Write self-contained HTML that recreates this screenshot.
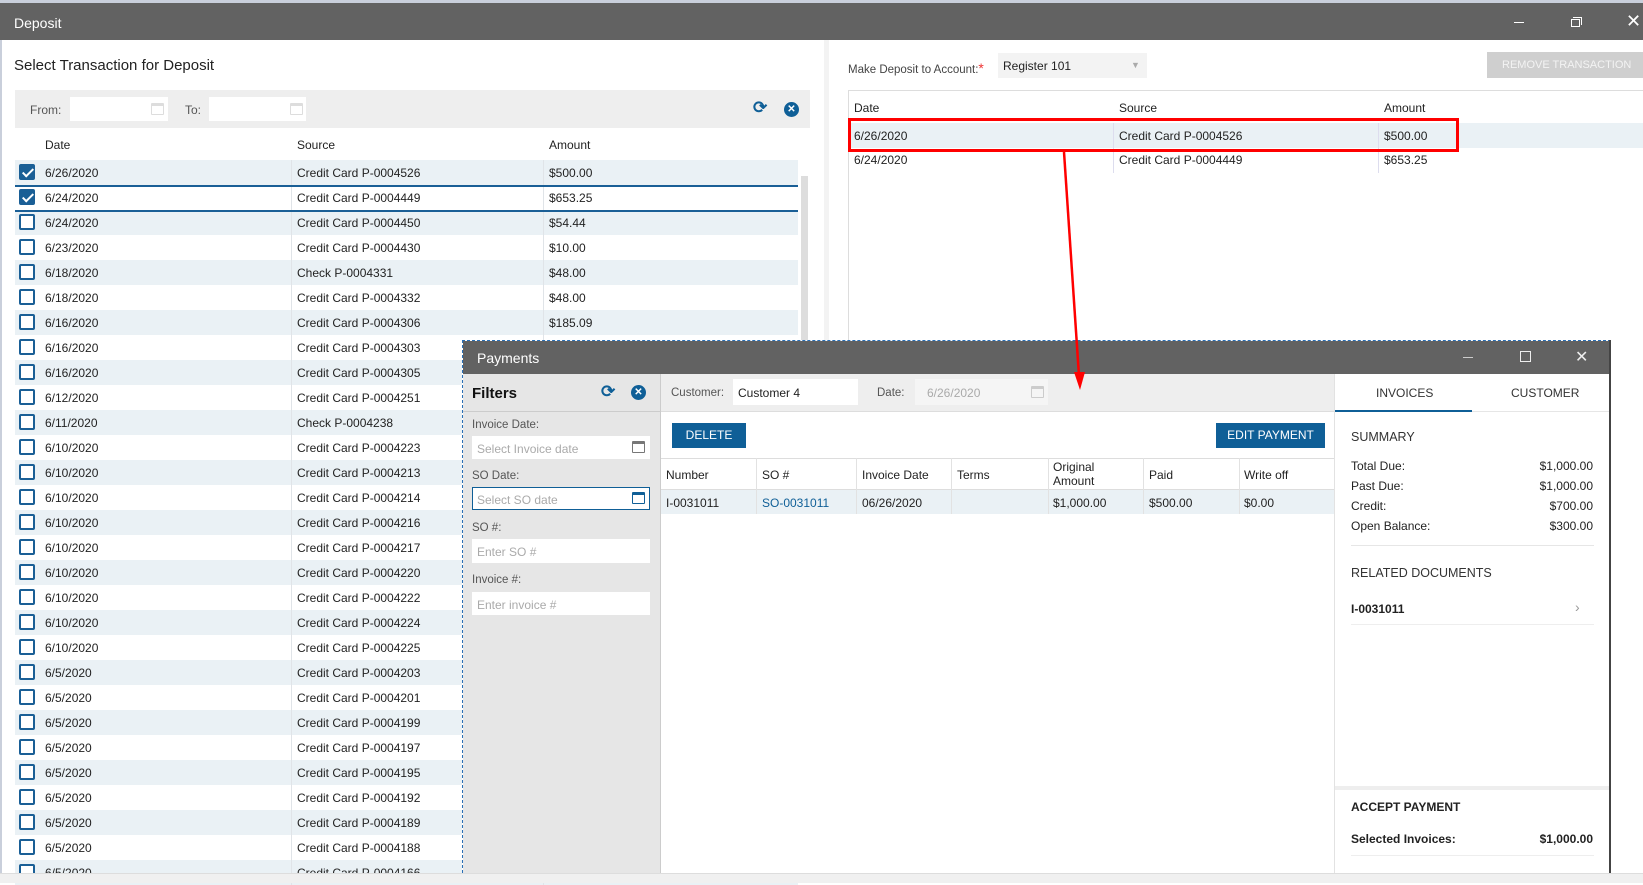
<!DOCTYPE html>
<html><head><meta charset="utf-8">
<style>
*{box-sizing:border-box;margin:0;padding:0}
body{width:1643px;height:883px;overflow:hidden;background:#fff;font-family:"Liberation Sans",sans-serif;font-size:12px;color:#222;position:relative}
.a{position:absolute}
.t{position:absolute;white-space:nowrap}
.inp{position:absolute;background:#fff}
.cal{position:absolute;width:13px;height:12px;border:1.5px solid #bbb;border-top-width:3px;border-radius:1px}
.cb{position:absolute;left:19px;width:16px;height:16px;border:2px solid #1a5f96;border-radius:2px;background:#fff}
.cb.on{background:#1a5f96}
.cb.on:after{content:"";position:absolute;left:4px;top:0px;width:4px;height:9px;border:solid #fff;border-width:0 2px 2px 0;transform:rotate(45deg)}
.btn{position:absolute;background:#0f5f97;color:#fff;text-align:center;font-size:12px}
.circ{position:absolute;width:15px;height:15px;border-radius:50%;background:#0f5f97;color:#fff;font-size:10px;text-align:center;line-height:15px;font-weight:bold}
</style></head><body>
<div class="a" style="left:0;top:0;width:1643px;height:4px;background:#c9cfdb"></div>
<div class="a" style="left:0;top:3px;width:1643px;height:37px;background:#626262"></div>
<div class="t" style="left:14px;top:15px;color:#fff;font-size:14px">Deposit</div>
<div class="a" style="left:1514px;top:22px;width:10px;height:1px;background:#fff"></div>
<div class="a" style="left:1571px;top:19px;width:9px;height:8px;border:1px solid #fff"></div>
<div class="a" style="left:1573px;top:17px;width:9px;height:8px;border-top:1px solid #fff;border-right:1px solid #fff"></div>
<div class="t" style="left:1626px;top:11px;color:#fff;font-size:18px">✕</div>
<div class="a" style="left:0;top:40px;width:2px;height:833px;background:#c9cfdb"></div>

<div class="t" style="left:14px;top:57px;font-size:15px;color:#222">Select Transaction for Deposit</div>
<div class="a" style="left:15px;top:90px;width:795px;height:38px;background:#eeeeee"></div>
<div class="t" style="left:30px;top:103px;color:#555">From:</div>
<div class="inp" style="left:70px;top:97px;width:98px;height:24px"></div>
<div class="cal" style="left:151px;top:103px;border-color:#ddd"></div>
<div class="t" style="left:185px;top:103px;color:#555">To:</div>
<div class="inp" style="left:209px;top:97px;width:97px;height:24px"></div>
<div class="cal" style="left:290px;top:103px;border-color:#ddd"></div>
<div class="t" style="left:753px;top:98px;color:#0f5f97;font-size:17px;font-weight:bold">⟳</div>
<div class="circ" style="left:784px;top:102px">✕</div>

<div class="t" style="left:45px;top:138px">Date</div>
<div class="t" style="left:297px;top:138px">Source</div>
<div class="t" style="left:549px;top:138px">Amount</div>
<div class="a" style="left:798px;top:160px;width:10px;height:713px;background:#fff"></div>
<div class="a" style="left:801px;top:176px;width:7px;height:165px;background:#ddd"></div>
<div class="a" style="left:824px;top:40px;width:5px;height:833px;background:#f3f3f3"></div>
<div id="rows"></div>

<div class="t" style="left:848px;top:60px;color:#444;font-size:11.5px">Make Deposit to Account:<span style="color:#e33;font-size:14px">*</span></div>
<div class="a" style="left:998px;top:53px;width:149px;height:25px;background:#f3f3f3"></div>
<div class="t" style="left:1003px;top:59px;color:#222">Register 101</div>
<div class="t" style="left:1131px;top:60px;color:#aaa;font-size:9px">▼</div>
<div class="a" style="left:1487px;top:52px;width:156px;height:26px;background:#cfcfcf"></div>
<div class="t" style="left:1502px;top:59px;color:#f3f3f3;font-size:11px">REMOVE TRANSACTION</div>
<div class="a" style="left:848px;top:90px;width:795px;height:1px;background:#ddd"></div>
<div class="a" style="left:848px;top:90px;width:1px;height:250px;background:#ddd"></div>
<div class="t" style="left:854px;top:101px">Date</div>
<div class="t" style="left:1119px;top:101px">Source</div>
<div class="t" style="left:1384px;top:101px">Amount</div>
<div class="a" style="left:849px;top:123px;width:794px;height:25px;background:#eaf1f5"></div>
<div class="a" style="left:1113px;top:123px;width:1px;height:50px;background:#dde"></div>
<div class="a" style="left:1378px;top:123px;width:1px;height:50px;background:#dde"></div>
<div class="t" style="left:854px;top:129px">6/26/2020</div>
<div class="t" style="left:1119px;top:129px">Credit Card P-0004526</div>
<div class="t" style="left:1384px;top:129px">$500.00</div>
<div class="t" style="left:854px;top:153px">6/24/2020</div>
<div class="t" style="left:1119px;top:153px">Credit Card P-0004449</div>
<div class="t" style="left:1384px;top:153px">$653.25</div>
<div class="a" style="left:848px;top:118px;width:611px;height:34px;border:3px solid #f00"></div>

<!-- payments window -->
<div class="a" style="left:462px;top:340px;width:1149px;height:543px;border:1px dashed #2a6fb5;background:#fff"></div>
<div class="a" style="left:463px;top:341px;width:1147px;height:33px;background:#626262"></div>
<div class="t" style="left:477px;top:350px;color:#fff;font-size:14px">Payments</div>
<div class="a" style="left:1463px;top:357px;width:10px;height:1px;background:#ccc"></div>
<div class="a" style="left:1520px;top:351px;width:11px;height:11px;border:1px solid #eee"></div>
<div class="t" style="left:1575px;top:347px;color:#eee;font-size:16px">✕</div>

<div class="a" style="left:463px;top:374px;width:198px;height:499px;background:#e6e6e6;border-right:1px solid #ccc"></div>
<div class="t" style="left:472px;top:385px;font-size:15px;font-weight:bold;color:#111">Filters</div>
<div class="t" style="left:601px;top:382px;color:#0f5f97;font-size:17px;font-weight:bold">⟳</div>
<div class="circ" style="left:631px;top:385px">✕</div>
<div class="a" style="left:463px;top:411px;width:197px;height:1px;background:#ccc"></div>
<div class="t" style="left:472px;top:419px;color:#555;font-size:11.5px">Invoice Date:</div>
<div class="inp" style="left:472px;top:436px;width:178px;height:23px"></div>
<div class="t" style="left:477px;top:442px;color:#aaa">Select Invoice date</div>
<div class="cal" style="left:632px;top:441px;border-color:#777"></div>
<div class="t" style="left:472px;top:470px;color:#555;font-size:11.5px">SO Date:</div>
<div class="inp" style="left:472px;top:487px;width:178px;height:23px;border:1px solid #0f5f97"></div>
<div class="t" style="left:477px;top:493px;color:#aaa">Select SO date</div>
<div class="cal" style="left:632px;top:492px;border-color:#0f5f97"></div>
<div class="t" style="left:472px;top:522px;color:#555;font-size:11.5px">SO #:</div>
<div class="inp" style="left:472px;top:539px;width:178px;height:24px"></div>
<div class="t" style="left:477px;top:545px;color:#aaa">Enter SO #</div>
<div class="t" style="left:472px;top:574px;color:#555;font-size:11.5px">Invoice #:</div>
<div class="inp" style="left:472px;top:592px;width:178px;height:23px"></div>
<div class="t" style="left:477px;top:598px;color:#aaa">Enter invoice #</div>

<div class="a" style="left:661px;top:374px;width:673px;height:38px;background:#eeeeee;border-bottom:1px solid #ddd"></div>
<div class="t" style="left:671px;top:387px;color:#555;font-size:11.5px">Customer:</div>
<div class="inp" style="left:733px;top:379px;width:125px;height:26px"></div>
<div class="t" style="left:738px;top:386px">Customer 4</div>
<div class="t" style="left:877px;top:387px;color:#555;font-size:11.5px">Date:</div>
<div class="a" style="left:915px;top:379px;width:133px;height:26px;background:#f5f5f5"></div>
<div class="t" style="left:927px;top:386px;color:#aaa">6/26/2020</div>
<div class="cal" style="left:1031px;top:386px;border-color:#ccc"></div>
<div class="btn" style="left:672px;top:423px;width:74px;height:25px;line-height:25px">DELETE</div>
<div class="btn" style="left:1216px;top:423px;width:109px;height:25px;line-height:25px">EDIT PAYMENT</div>
<div class="a" style="left:661px;top:458px;width:673px;height:1px;background:#ddd"></div>
<div class="a" style="left:661px;top:489px;width:673px;height:25px;background:#eaf1f5;border-top:1px solid #ddd"></div>
<div class="t" style="left:666px;top:468px">Number</div>
<div class="t" style="left:762px;top:468px">SO #</div>
<div class="t" style="left:862px;top:468px">Invoice Date</div>
<div class="t" style="left:957px;top:468px">Terms</div>
<div class="t" style="left:1053px;top:460px;line-height:14px">Original<br>Amount</div>
<div class="t" style="left:1149px;top:468px">Paid</div>
<div class="t" style="left:1244px;top:468px">Write off</div>
<div class="a" style="left:756px;top:458px;width:1px;height:56px;background:#e2e2e2"></div>
<div class="a" style="left:856px;top:458px;width:1px;height:56px;background:#e2e2e2"></div>
<div class="a" style="left:951px;top:458px;width:1px;height:56px;background:#e2e2e2"></div>
<div class="a" style="left:1048px;top:458px;width:1px;height:56px;background:#e2e2e2"></div>
<div class="a" style="left:1143px;top:458px;width:1px;height:56px;background:#e2e2e2"></div>
<div class="a" style="left:1239px;top:458px;width:1px;height:56px;background:#e2e2e2"></div>
<div class="t" style="left:666px;top:496px">I-0031011</div>
<div class="t" style="left:762px;top:496px;color:#0f5f97">SO-0031011</div>
<div class="t" style="left:862px;top:496px">06/26/2020</div>
<div class="t" style="left:1053px;top:496px">$1,000.00</div>
<div class="t" style="left:1149px;top:496px">$500.00</div>
<div class="t" style="left:1244px;top:496px">$0.00</div>

<div class="a" style="left:1334px;top:374px;width:1px;height:499px;background:#e2e2e2"></div>
<div class="t" style="left:1376px;top:386px;color:#333">INVOICES</div>
<div class="t" style="left:1511px;top:386px;color:#333">CUSTOMER</div>
<div class="a" style="left:1335px;top:410px;width:137px;height:2px;background:#0f5f97"></div>
<div class="a" style="left:1472px;top:411px;width:137px;height:1px;background:#e6e6e6"></div>
<div class="t" style="left:1351px;top:430px;font-size:12.5px;color:#333">SUMMARY</div>
<div class="t" style="left:1351px;top:459px">Total Due:</div><div class="t" style="right:50px;top:459px">$1,000.00</div>
<div class="t" style="left:1351px;top:479px">Past Due:</div><div class="t" style="right:50px;top:479px">$1,000.00</div>
<div class="t" style="left:1351px;top:499px">Credit:</div><div class="t" style="right:50px;top:499px">$700.00</div>
<div class="t" style="left:1351px;top:519px">Open Balance:</div><div class="t" style="right:50px;top:519px">$300.00</div>
<div class="a" style="left:1351px;top:545px;width:243px;height:1px;background:#e6e6e6"></div>
<div class="t" style="left:1351px;top:566px;font-size:12.5px;color:#333">RELATED DOCUMENTS</div>
<div class="t" style="left:1351px;top:602px;font-weight:bold">I-0031011</div>
<div class="t" style="left:1575px;top:599px;color:#999;font-size:14px">›</div>
<div class="a" style="left:1351px;top:624px;width:243px;height:1px;background:#eee"></div>
<div class="a" style="left:1335px;top:786px;width:275px;height:4px;background:#eee"></div>
<div class="t" style="left:1351px;top:800px;font-weight:bold;color:#222">ACCEPT PAYMENT</div>
<div class="t" style="left:1351px;top:832px;font-weight:bold">Selected Invoices:</div>
<div class="t" style="right:50px;top:832px;font-weight:bold">$1,000.00</div>
<div class="a" style="left:1351px;top:855px;width:243px;height:1px;background:#eee"></div>
<div class="a" style="left:1609px;top:340px;width:2px;height:533px;background:#444"></div>

<svg class="a" style="left:1055px;top:150px" width="40" height="245"><line x1="9" y1="2" x2="24" y2="226" stroke="#f00" stroke-width="2.5"/><polygon points="19,222 30,222 25,240" fill="#f00"/></svg>

<div class="a" style="left:0;top:873px;width:1643px;height:10px;background:#f0f0f0;border-top:1px solid #ddd"></div>

<script>
var d=[["6/26/2020","Credit Card P-0004526","$500.00",1],["6/24/2020","Credit Card P-0004449","$653.25",1],["6/24/2020","Credit Card P-0004450","$54.44"],["6/23/2020","Credit Card P-0004430","$10.00"],["6/18/2020","Check P-0004331","$48.00"],["6/18/2020","Credit Card P-0004332","$48.00"],["6/16/2020","Credit Card P-0004306","$185.09"],["6/16/2020","Credit Card P-0004303",""],["6/16/2020","Credit Card P-0004305",""],["6/12/2020","Credit Card P-0004251",""],["6/11/2020","Check P-0004238",""],["6/10/2020","Credit Card P-0004223",""],["6/10/2020","Credit Card P-0004213",""],["6/10/2020","Credit Card P-0004214",""],["6/10/2020","Credit Card P-0004216",""],["6/10/2020","Credit Card P-0004217",""],["6/10/2020","Credit Card P-0004220",""],["6/10/2020","Credit Card P-0004222",""],["6/10/2020","Credit Card P-0004224",""],["6/10/2020","Credit Card P-0004225",""],["6/5/2020","Credit Card P-0004203",""],["6/5/2020","Credit Card P-0004201",""],["6/5/2020","Credit Card P-0004199",""],["6/5/2020","Credit Card P-0004197",""],["6/5/2020","Credit Card P-0004195",""],["6/5/2020","Credit Card P-0004192",""],["6/5/2020","Credit Card P-0004189",""],["6/5/2020","Credit Card P-0004188",""],["6/5/2020","Credit Card P-0004166",""]];
var h="";d.forEach(function(r,i){var y=160+i*25;if(i%2==0)h+='<div class="a" style="left:15px;top:'+y+'px;width:783px;height:25px;background:#eaf1f5"></div>';
h+='<div class="a" style="left:291px;top:'+y+'px;width:1px;height:25px;background:#e0e4e8"></div><div class="a" style="left:543px;top:'+y+'px;width:1px;height:25px;background:#e0e4e8"></div>';
h+='<div class="cb'+(r[3]?' on':'')+'" style="top:'+(y+4)+'px"></div><div class="t" style="left:45px;top:'+(y+6)+'px">'+r[0]+'</div><div class="t" style="left:297px;top:'+(y+6)+'px">'+r[1]+'</div><div class="t" style="left:549px;top:'+(y+6)+'px">'+r[2]+'</div>';});
h+='<div class="a" style="left:15px;top:185px;width:783px;height:2px;background:#1a5f96"></div><div class="a" style="left:15px;top:210px;width:783px;height:2px;background:#1a5f96"></div>';
document.getElementById("rows").innerHTML=h;
</script>
</body></html>
